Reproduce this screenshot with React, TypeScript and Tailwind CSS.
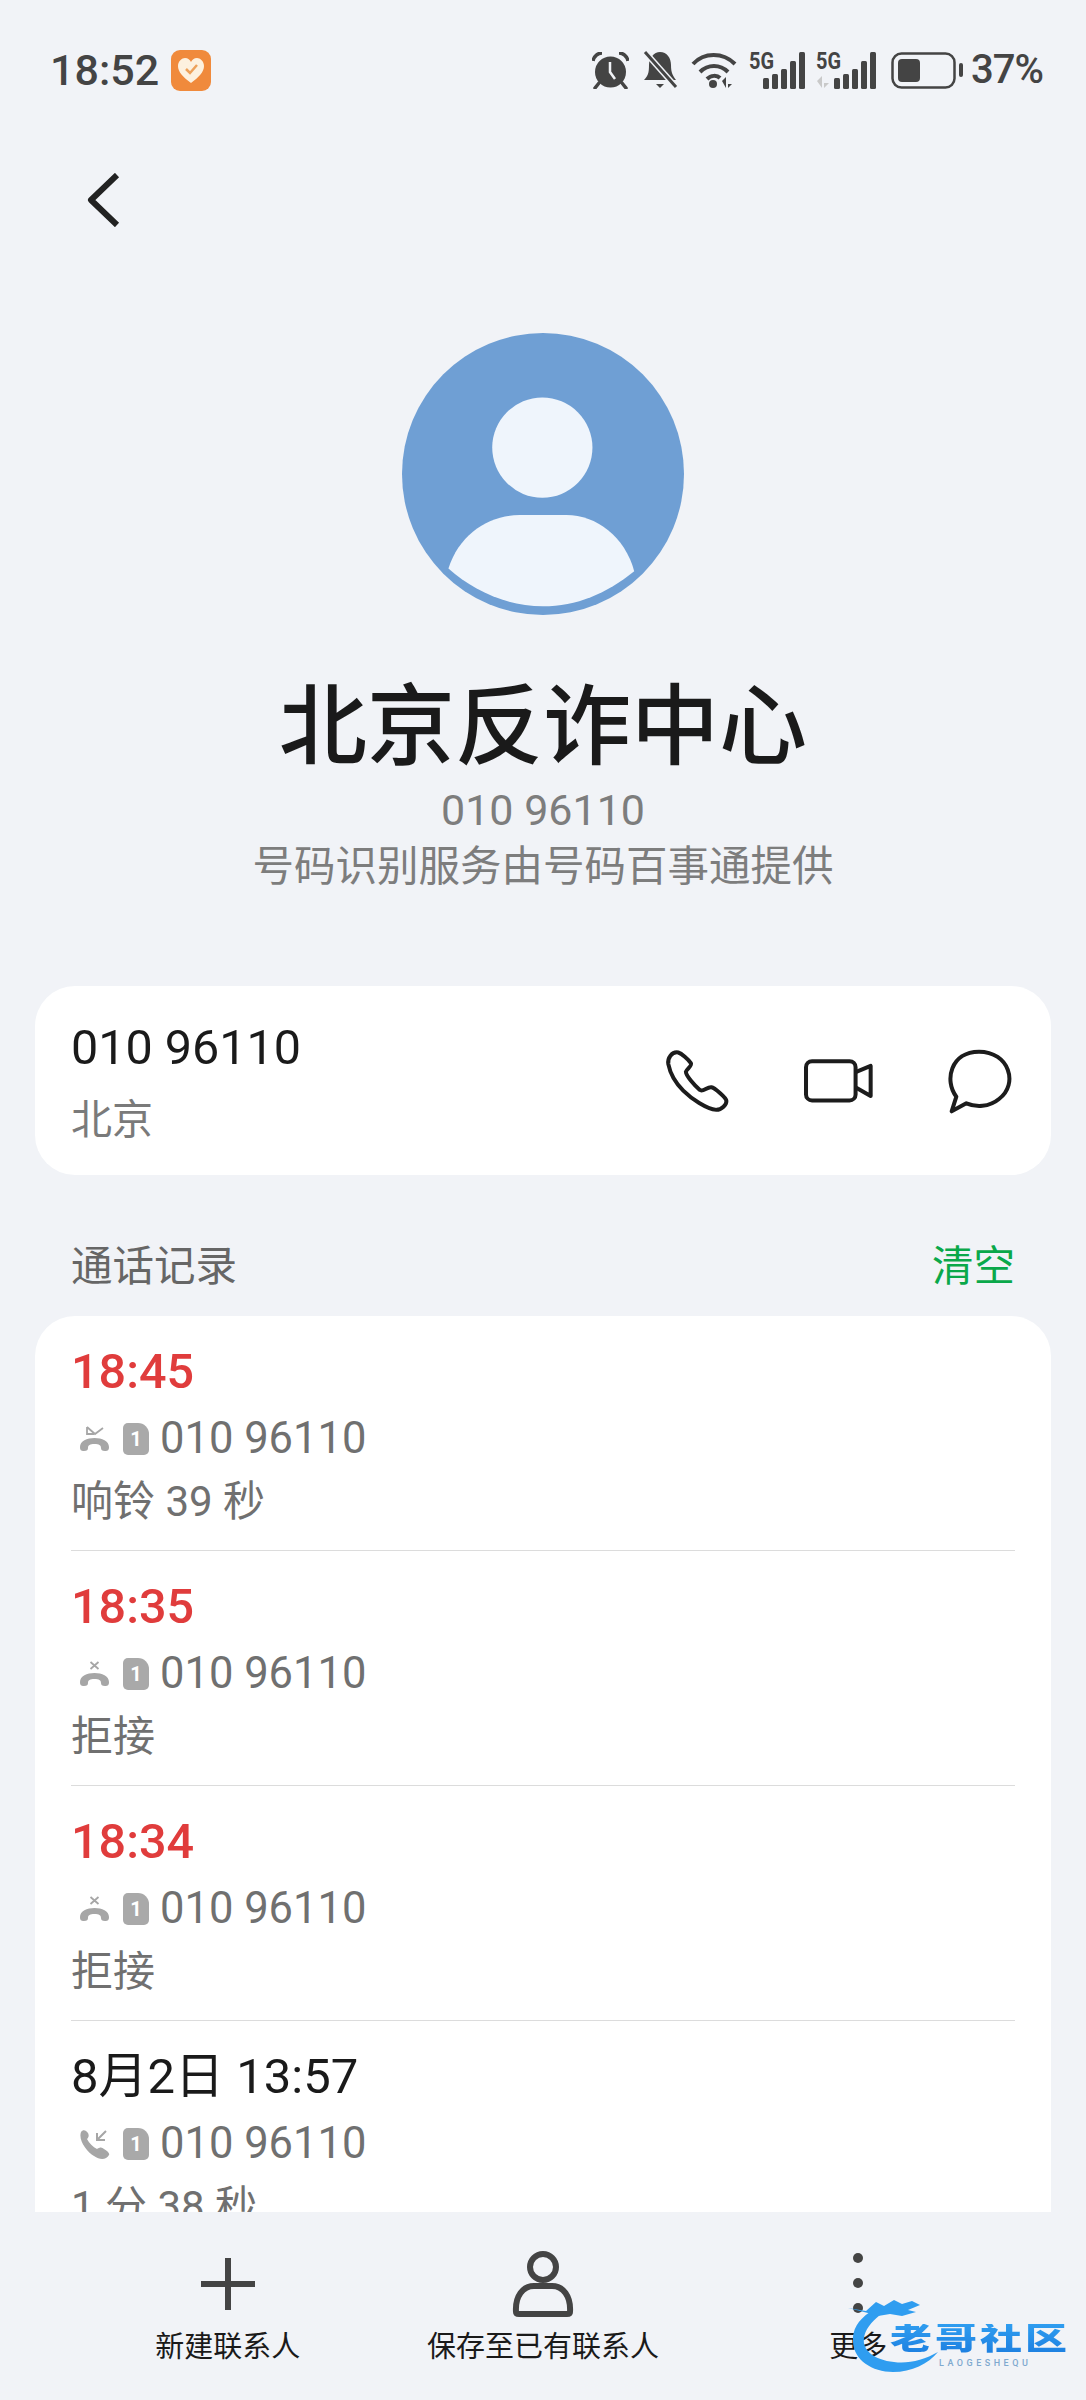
import React, { FC } from 'react';

const calls = [
  { time: '18:45', red: true, icon: 'missed', note: '响铃 39 秒' },
  { time: '18:35', red: true, icon: 'rejected', note: '拒接' },
  { time: '18:34', red: true, icon: 'rejected', note: '拒接' },
  { time: '8月2日 13:57', red: false, icon: 'incoming', note: '1 分 38 秒' },
];

const Hangup = () => (
  <path d="M2 21C2 15 9 12 16.500 12C24 12 31 15 31 21C31 24 30 25 27 25C24 25 23 24 23 22C23 19 21 18 16.500 18C12 18 10 19 10 22C10 24 9 25 6 25C3 25 2 24 2 21Z" fill="#a6a6a6" />
);

const CallIcon: FC<{ type: string }> = ({ type }) => {
  if (type === 'incoming') {
    return (
      <svg viewBox="0 0 33 30" className="h-[30px] w-[33px] shrink-0">
        <path d="M3 3C5 0 8 1 10 4C11 6 11 8 9 10C11 14 15 18 19 20C22 18 24 18 26 20C29 22 32 24 31 26C28 31 22 31 16 27C9 23 0 11 3 3Z" fill="#a6a6a6" />
        <path d="M28 2L19 11M19 4V11H27" fill="none" stroke="#a6a6a6" strokeWidth="2" />
      </svg>
    );
  }
  return (
    <svg viewBox="0 0 33 26" className="h-[26px] w-[33px] shrink-0">
      <Hangup />
      {type === 'missed' ? (
        <path d="M9 1V8H16M9 1L17 8L25 2" fill="none" stroke="#a6a6a6" strokeWidth="1.800" />
      ) : (
        <path d="M12.500 1L20.500 8M20.500 1L12.500 8" fill="none" stroke="#a6a6a6" strokeWidth="1.800" />
      )}
    </svg>
  );
};

const SimBadge = () => (
  <div className="flex h-[32px] w-[26px] shrink-0 items-center justify-center rounded-[5px] rounded-tr-[11px] bg-[#a9a9a9] text-[20px] font-bold leading-none text-white">
    1
  </div>
);

const SignalBars: FC<{ arrows?: boolean }> = ({ arrows }) => (
  <svg viewBox={arrows ? '-18 0 60 37' : '-14 0 56 37'} className={arrows ? 'h-[37px] w-[60px] overflow-visible' : 'h-[37px] w-[56px] overflow-visible'}>
    <text x={arrows ? -18 : -14} y="17" fontSize="23" fontWeight="700" fill="#444" textLength="25" lengthAdjust="spacingAndGlyphs" fontFamily="Roboto, sans-serif">
      5G
    </text>
    {arrows && <path d="M-17 29L-12 24V36ZM-10 24V36L-5 31H-10Z" fill="#c9c9c9" />}
    <rect x="0" y="26" width="6" height="11" rx="1.500" fill="#444" />
    <rect x="9" y="22" width="6" height="15" rx="1.500" fill="#444" />
    <rect x="18" y="17" width="6" height="20" rx="1.500" fill="#444" />
    <rect x="27" y="9" width="6" height="28" rx="1.500" fill="#444" />
    <rect x="36" y="0" width="6" height="37" rx="1.500" fill="#444" />
  </svg>
);

const StatusBar = () => (
  <div className="flex h-[140px] items-center pl-[50px] pr-[43px] text-[#444]">
    <span className="text-[43px] font-medium leading-none">18:52</span>
    <svg viewBox="0 0 40 41" className="ml-[12px] h-[41px] w-[40px]">
      <rect width="40" height="41" rx="9" fill="#f08a3c" />
      <path d="M20 33C12 27 7 22 7 16C7 11 11 8 14 8C17 8 19 10 20 12C21 10 23 8 26 8C29 8 33 11 33 16C33 22 28 27 20 33Z" fill="#fdf1df" />
      <path d="M15 19L19 23L26 15" fill="none" stroke="#eda15a" strokeWidth="2.500" />
    </svg>
    <div className="ml-auto flex items-center">
      <svg viewBox="0 0 37 37" className="h-[37px] w-[37px]">
        <circle cx="18.500" cy="20" r="15.500" fill="#444" />
        <path d="M18 10V20L23 27" fill="none" stroke="#f1f3f7" strokeWidth="2.500" />
        <path d="M1 9C2 4 6 1 10 1M36 9C35 4 31 1 27 1" fill="none" stroke="#444" strokeWidth="3.500" />
        <path d="M7 31L3 36M30 31L34 36" stroke="#444" strokeWidth="3.500" strokeLinecap="round" />
      </svg>
      <svg viewBox="0 0 35 38" className="ml-[14px] h-[38px] w-[35px]">
        <path d="M17 1C24 1 28 7 28 14C28 22 30 25 33 29H1C5 25 6 22 6 14C6 7 11 1 17 1Z" fill="#444" />
        <path d="M13 33H21L17 37Z" fill="#444" />
        <path d="M2 1L33 36" stroke="#f1f3f7" strokeWidth="6" />
        <path d="M2 1L33 36" stroke="#444" strokeWidth="3" />
      </svg>
      <svg viewBox="0 0 47 37" className="ml-[13px] h-[37px] w-[47px]">
        <path d="M2 12C13 0 32 0 44 12M9 20C17 12 29 12 37 20M16 27C20 23 26 23 29 26" fill="none" stroke="#444" strokeWidth="4" />
        <circle cx="22" cy="32" r="4" fill="#444" />
        <path d="M31 29L35 25V36ZM37 25V36L41 32H37Z" fill="#444" />
      </svg>
      <div className="ml-[11px]">
        <SignalBars />
      </div>
      <div className="ml-[11px]">
        <SignalBars arrows />
      </div>
      <svg viewBox="0 0 72 37" className="ml-[15px] h-[37px] w-[72px]">
        <rect x="1.500" y="1.500" width="62" height="34" rx="9" fill="none" stroke="#444" strokeWidth="2.500" />
        <rect x="7" y="7" width="22" height="23" rx="4" fill="#444" />
        <rect x="68" y="11" width="4" height="14" rx="2" fill="#444" />
      </svg>
      <span className="ml-[8px] text-[40px] font-medium leading-none tracking-[-1px]">37%</span>
    </div>
  </div>
);

const Avatar = () => (
  <svg viewBox="68 70 844 844" className="h-[282px] w-[282px]">
    <circle cx="490" cy="492" r="422" fill="#6f9fd4" />
    <circle cx="488" cy="413" r="150" fill="#eff5fc" />
    <path d="M207 775C240 670 330 615 420 615H560C650 615 735 680 763 783C680 850 590 888 490 888C380 888 280 840 207 775Z" fill="#eff5fc" />
  </svg>
);

const ActionIcons = () => (
  <div className="flex items-center">
    <svg viewBox="132 142 202 198" className="h-[66px] w-[67px]" fill="none" stroke="#1c1c1c" strokeWidth="12" strokeLinejoin="round">
      <path d="M145 190C142 172 155 152 175 155C185 158 205 175 213 187C218 195 200 205 198 213C198 225 225 255 240 268C250 275 262 258 275 260C285 262 318 290 320 300C322 312 305 328 290 328C260 325 215 295 190 270C165 245 150 215 145 190Z" />
    </svg>
    <svg viewBox="556 177 206 130" className="ml-[73px] h-[44px] w-[69px]" fill="none" stroke="#1c1c1c" strokeWidth="12" strokeLinejoin="round">
      <rect x="562" y="183" width="148" height="117" rx="18" />
      <path d="M712 215L755 197V287L712 262" />
    </svg>
    <svg viewBox="978 143 204 196" className="ml-[72px] h-[66px] w-[68px]" fill="none" stroke="#1c1c1c" strokeWidth="12" strokeLinejoin="round">
      <path d="M1012 288C975 240 995 153 1080 153C1170 153 1200 250 1140 295C1110 320 1070 320 1042 308L998 332Z" />
    </svg>
  </div>
);

const BottomBar = () => (
  <div className="grid h-[188px] shrink-0 grid-cols-3 bg-[#f1f3f7] px-[70px] text-[29px] leading-none text-[#1a1a1a]">
    <div className="flex flex-col items-center pt-[39px]">
      <svg viewBox="0 0 66 66" className="h-[66px] w-[66px]">
        <path d="M33 7V59M6 33H60" stroke="#444" strokeWidth="6" />
      </svg>
      <span className="mt-[16px]">新建联系人</span>
    </div>
    <div className="flex flex-col items-center pt-[39px]">
      <svg viewBox="0 0 66 66" className="h-[66px] w-[66px]" fill="none" stroke="#444" strokeWidth="6">
        <circle cx="33" cy="16" r="13" />
        <path d="M6 61C5 45 13 35 24 35H42C53 35 61 45 60 61C60 63 59 63 57 63H9C7 63 6 63 6 61Z" />
      </svg>
      <span className="mt-[16px]">保存至已有联系人</span>
    </div>
    <div className="flex flex-col items-center pt-[39px]">
      <div className="flex h-[66px] flex-col items-center gap-[15px] pt-[2px]">
        <div className="h-[10px] w-[10px] rounded-full bg-[#444]" />
        <div className="h-[10px] w-[10px] rounded-full bg-[#444]" />
        <div className="h-[10px] w-[10px] rounded-full bg-[#444]" />
      </div>
      <span className="mt-[16px]">更多</span>
    </div>
  </div>
);

const Watermark = () => (
  <div className="absolute left-[846px] top-[2298px] h-[76px] w-[226px]">
    <svg viewBox="0 0 150 76" className="absolute left-0 top-0 h-[76px] w-[150px]">
      <path d="M24 14C12 22 6 32 7 44C8 62 26 74 47 74C66 74 82 66 92 54C78 62 62 66 48 64C28 62 16 52 18 40C19 32 25 24 34 17Z" fill="#2f9df0" />
      <path d="M2 10L20 13L30 4L38 8L48 2L56 6L66 3L74 7L62 12L70 14L56 18L44 16L32 18L22 15Z" fill="#2f9df0" />
    </svg>
    <span className="absolute left-[44px] top-[26px] origin-top-left scale-y-[0.72] whitespace-nowrap bg-gradient-to-b from-[#2f9df0] to-[#1d7fe0] bg-clip-text text-[42px] font-black leading-none tracking-[3px] text-transparent">
      老哥社区
    </span>
    <span className="absolute left-[93px] top-[61px] whitespace-nowrap text-[9px] font-medium leading-none tracking-[3.500px] text-[#7fa9cf]">
      LAOGESHEQU
    </span>
  </div>
);

const App: FC = () => {
  return (
    <div className="relative flex h-[2400px] w-[1086px] flex-col overflow-hidden bg-[#f1f3f7] font-['Roboto','Noto_Sans_CJK_SC',sans-serif]">
      <div className="min-h-0 flex-1 overflow-hidden">
        <StatusBar />
        <div className="flex h-[193px] items-start pl-[86px] pt-[33px]">
          <svg viewBox="0 0 34 54" className="h-[54px] w-[34px]">
            <path d="M31 2L5 27L31 52" fill="none" stroke="#222" strokeWidth="6" strokeLinejoin="round" />
          </svg>
        </div>
        <div className="flex flex-col items-center">
          <Avatar />
          <h1 className="mt-[62px] text-[88px] font-medium leading-[100px] text-[#1a1a1a]">北京反诈中心</h1>
          <p className="mt-[5px] text-[43px] leading-[56px] text-[#7d7d7d]">010 96110</p>
          <p className="mt-[1px] text-[41.500px] leading-[56px] text-[#7d7d7d]">号码识别服务由号码百事通提供</p>
        </div>
        <div className="mx-[35px] mt-[91px] flex h-[189px] items-center justify-between rounded-[40px] bg-white pl-[36px] pr-[38px]">
          <div className="pt-[4px]">
            <div className="text-[48.500px] leading-[62px] text-[#1a1a1a]">010 96110</div>
            <div className="mt-[12px] text-[41px] leading-[58px] text-[#7a7a7a]">北京</div>
          </div>
          <ActionIcons />
        </div>
        <div className="mx-[71px] mt-[62px] flex h-[60px] items-center justify-between text-[41.500px] leading-none">
          <span className="text-[#666]">通话记录</span>
          <span className="text-[#0aa84a]">清空</span>
        </div>
        <div className="mx-[35px] mt-[19px] rounded-[40px] bg-white px-[36px]">
          {calls.map((c, i) => (
            <div key={c.time} className={i < calls.length - 1 ? 'h-[235px] border-b border-[#dcdcdc] pt-[26px]' : 'h-[235px] pt-[26px]'}>
              <div className={c.red ? 'text-[48.500px] font-medium leading-[60px] text-[#e03c3c]' : 'text-[49px] leading-[60px] text-[#1a1a1a]'}>
                {c.time}
              </div>
              <div className="mt-[8px] flex h-[58px] items-center pl-[7px]">
                <CallIcon type={c.icon} />
                <div className="ml-[12px]">
                  <SimBadge />
                </div>
                <span className="ml-[11px] text-[43.500px] leading-none text-[#707070]">010 96110</span>
              </div>
              <div className="mt-[5px] text-[42px] leading-[58px] text-[#707070]">{c.note}</div>
            </div>
          ))}
        </div>
      </div>
      <BottomBar />
      <Watermark />
    </div>
  );
};

export default App;
